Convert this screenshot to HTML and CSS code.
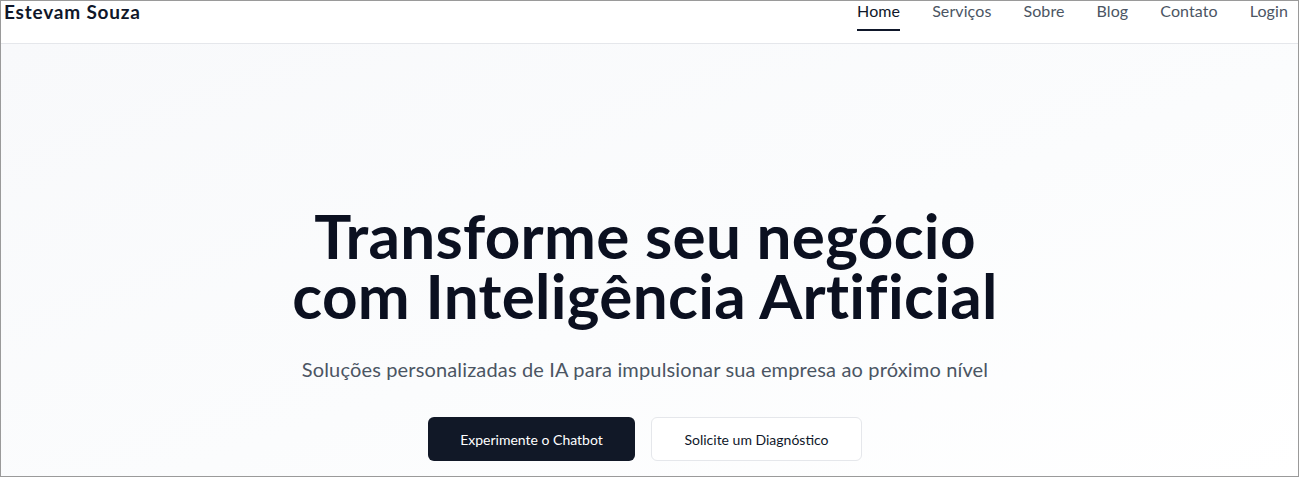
FILE: index.html
```html
<!DOCTYPE html>
<html lang="pt-BR">
<head>
<meta charset="utf-8">
<title>Estevam Souza</title>
<link rel="stylesheet" href="styles.css">
</head>
<body>
<div class="frame">
  <header class="site-header">
    <a class="logo" href="#">Estevam Souza</a>
    <nav class="nav">
      <a class="nav-link active" href="#">Home</a>
      <a class="nav-link" href="#">Serviços</a>
      <a class="nav-link" href="#">Sobre</a>
      <a class="nav-link" href="#">Blog</a>
      <a class="nav-link" href="#">Contato</a>
      <a class="nav-link" href="#">Login</a>
    </nav>
  </header>
  <main class="hero">
    <h1 class="hero-title">Transforme seu negócio<br>com Inteligência Artificial</h1>
    <p class="hero-sub">Soluções personalizadas de IA para impulsionar sua empresa ao próximo nível</p>
    <div class="hero-actions">
      <a class="btn btn-dark" href="#">Experimente o Chatbot</a>
      <a class="btn btn-light" href="#">Solicite um Diagnóstico</a>
    </div>
  </main>
</div>
</body>
</html>
```
FILE: styles.css
```css
* { box-sizing: border-box; }
html, body { margin: 0; padding: 0; }
body {
  font-family: Lato, "Noto Sans", sans-serif;
  color: #0f172a;
  background: #ffffff;
}
a { text-decoration: none; color: inherit; }
.frame {
  height: 477px;
  border: 1px solid #9a9a9a;
  overflow: hidden;
  display: flex;
  flex-direction: column;
}
.site-header {
  height: 43px;
  border-bottom: 1px solid #e5e7eb;
  display: flex;
  justify-content: space-between;
  align-items: flex-start;
  padding: 0 10px 0 3px;
  background: #fff;
  flex-shrink: 0;
}
.logo {
  font-size: 19px;
  font-weight: 700;
  letter-spacing: 0.8px;
  color: #0f172a;
  line-height: 22px;
}
.nav {
  display: flex;
  gap: 32px;
  letter-spacing: 0.1px;
}
.nav-link {
  font-size: 16px;
  color: #4b5563;
  line-height: 20px;
  padding-bottom: 8px;
  border-bottom: 2px solid transparent;
}
.nav-link.active {
  color: #0f172a;
  border-bottom-color: #0f172a;
}
.hero {
  flex: 1;
  background: linear-gradient(160deg, #f8f9fb 0%, #fbfcfd 55%, #ffffff 100%);
  display: flex;
  flex-direction: column;
  align-items: center;
  padding-top: 161px;
  padding-right: 9px;
}
.hero-title {
  margin: 0;
  font-size: 62px;
  line-height: 60px;
  font-weight: 700;
  letter-spacing: 0.3px;
  text-align: center;
  color: #0b1020;
}
.hero-sub {
  margin: 30px 0 0;
  font-size: 20px;
  line-height: 28px;
  letter-spacing: 0.15px;
  color: #4b5563;
}
.hero-actions {
  display: flex;
  gap: 16px;
  margin-top: 34px;
}
.btn {
  height: 44px;
  display: flex;
  align-items: center;
  justify-content: center;
  font-size: 14px;
  border-radius: 6px;
}
.btn-dark {
  width: 207px;
  background: #111827;
  color: #ffffff;
}
.btn-light {
  width: 211px;
  background: #ffffff;
  border: 1px solid #e5e7eb;
  color: #0f172a;
}
```
